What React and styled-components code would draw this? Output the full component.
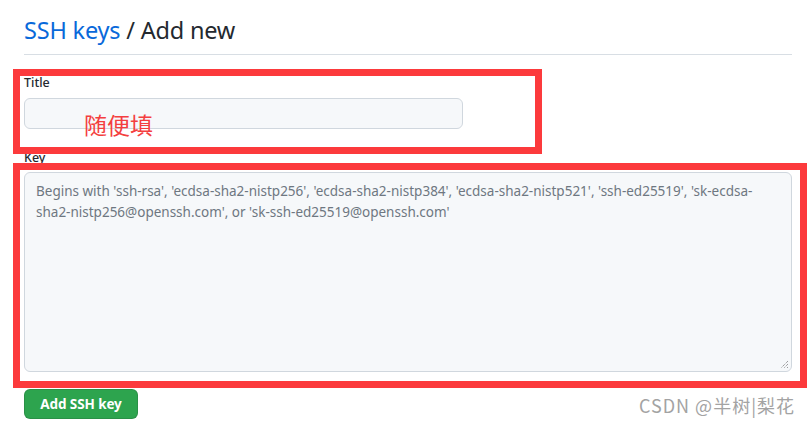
import React from "react";
import styled, { createGlobalStyle } from "styled-components";

const Global = createGlobalStyle`
  html, body { margin: 0; padding: 0; background: #ffffff; }
  body { font-family: "Noto Sans", "Liberation Sans", sans-serif; color: #24292f; }
  * { box-sizing: border-box; }
`;

const Page = styled.div`
  position: relative;
  width: 809px;
  height: 425px;
  overflow: hidden;
  padding: 0 17px 0 24px;
`;

const Header = styled.div`
  height: 55px;
  border-bottom: 1px solid #d8dee4;
  display: flex;
  align-items: flex-end;
  padding-bottom: 9px;
`;

const Heading = styled.h2`
  margin: 0;
  font-size: 23.5px;
  font-weight: 400;
  line-height: 30px;
  color: #24292f;
  letter-spacing: -0.2px;
`;

const Crumb = styled.span`
  color: #0969da;
`;

const Form = styled.form`
  display: flex;
  flex-direction: column;
  padding-top: 20px;
`;

const Field = styled.div`
  display: flex;
  flex-direction: column;
  margin-bottom: ${(p) => p.$gap}px;
`;

const Label = styled.label`
  font-size: 12.5px;
  font-weight: 500;
  line-height: 16px;
  height: 16px;
  margin-bottom: ${(p) => p.$gap}px;
  color: #24292f;
`;

const Input = styled.div`
  width: 439px;
  height: 31px;
  background: #f6f8fa;
  border: 1px solid #d0d7de;
  border-radius: 6px;
`;

const TextArea = styled.div`
  position: relative;
  width: 768px;
  height: 200px;
  background: #f6f8fa;
  border: 1px solid #d0d7de;
  border-radius: 6px;
  padding: 8px 11px;
  font-size: 13.5px;
  line-height: 21px;
  color: #6e7781;
`;

const Grip = styled.svg`
  position: absolute;
  right: 2px;
  bottom: 2px;
`;

const Button = styled.button`
  align-self: flex-start;
  width: 114px;
  height: 30px;
  border: 1px solid rgba(27, 31, 36, 0.15);
  border-radius: 6px;
  background: #2da44e;
  color: #ffffff;
  font-family: inherit;
  font-size: 13.5px;
  font-weight: 700;
  padding: 0;
  letter-spacing: -0.1px;
`;

const Annotation = styled.div`
  position: absolute;
  left: ${(p) => p.$x}px;
  top: ${(p) => p.$y}px;
  width: ${(p) => p.$w}px;
  height: ${(p) => p.$h}px;
  border: 7px solid #fc3a3c;
  pointer-events: none;
`;

const Note = styled.div`
  position: absolute;
  left: 84px;
  top: 109px;
  font-family: "Noto Sans CJK SC", sans-serif;
  font-size: 23px;
  line-height: 30px;
  color: #f43f3f;
`;

const Watermark = styled.div`
  position: absolute;
  right: 14px;
  top: 393px;
  font-family: "Noto Sans CJK SC", sans-serif;
  font-size: 18px;
  line-height: 24px;
  color: #a3a3a3;
  letter-spacing: 1px;
`;

export default function App() {
  return (
    <>
      <Global />
      <Page>
        <Header>
          <Heading>
            <Crumb>SSH keys</Crumb> / Add new
          </Heading>
        </Header>
        <Form>
          <Field $gap={21}>
            <Label $gap={7}>Title</Label>
            <Input />
          </Field>
          <Field $gap={17}>
            <Label $gap={6}>Key</Label>
            <TextArea>
              Begins with 'ssh-rsa', 'ecdsa-sha2-nistp256', 'ecdsa-sha2-nistp384', 'ecdsa-sha2-nistp521', 'ssh-ed25519', 'sk-ecdsa-sha2-nistp256@openssh.com', or 'sk-ssh-ed25519@openssh.com'
              <Grip width="9" height="9" viewBox="0 0 9 9">
                <path d="M8 1 L1 8 M8 4 L4 8 M8 7 L7 8" stroke="#555" strokeWidth="0.8" strokeDasharray="1 1" />
              </Grip>
            </TextArea>
          </Field>
          <Button type="button">Add SSH key</Button>
        </Form>
        <Annotation $x={13} $y={69} $w={529} $h={85} />
        <Annotation $x={13} $y={163} $w={794} $h={225} />
        <Note>随便填</Note>
        <Watermark>CSDN @半树|梨花</Watermark>
      </Page>
    </>
  );
}
